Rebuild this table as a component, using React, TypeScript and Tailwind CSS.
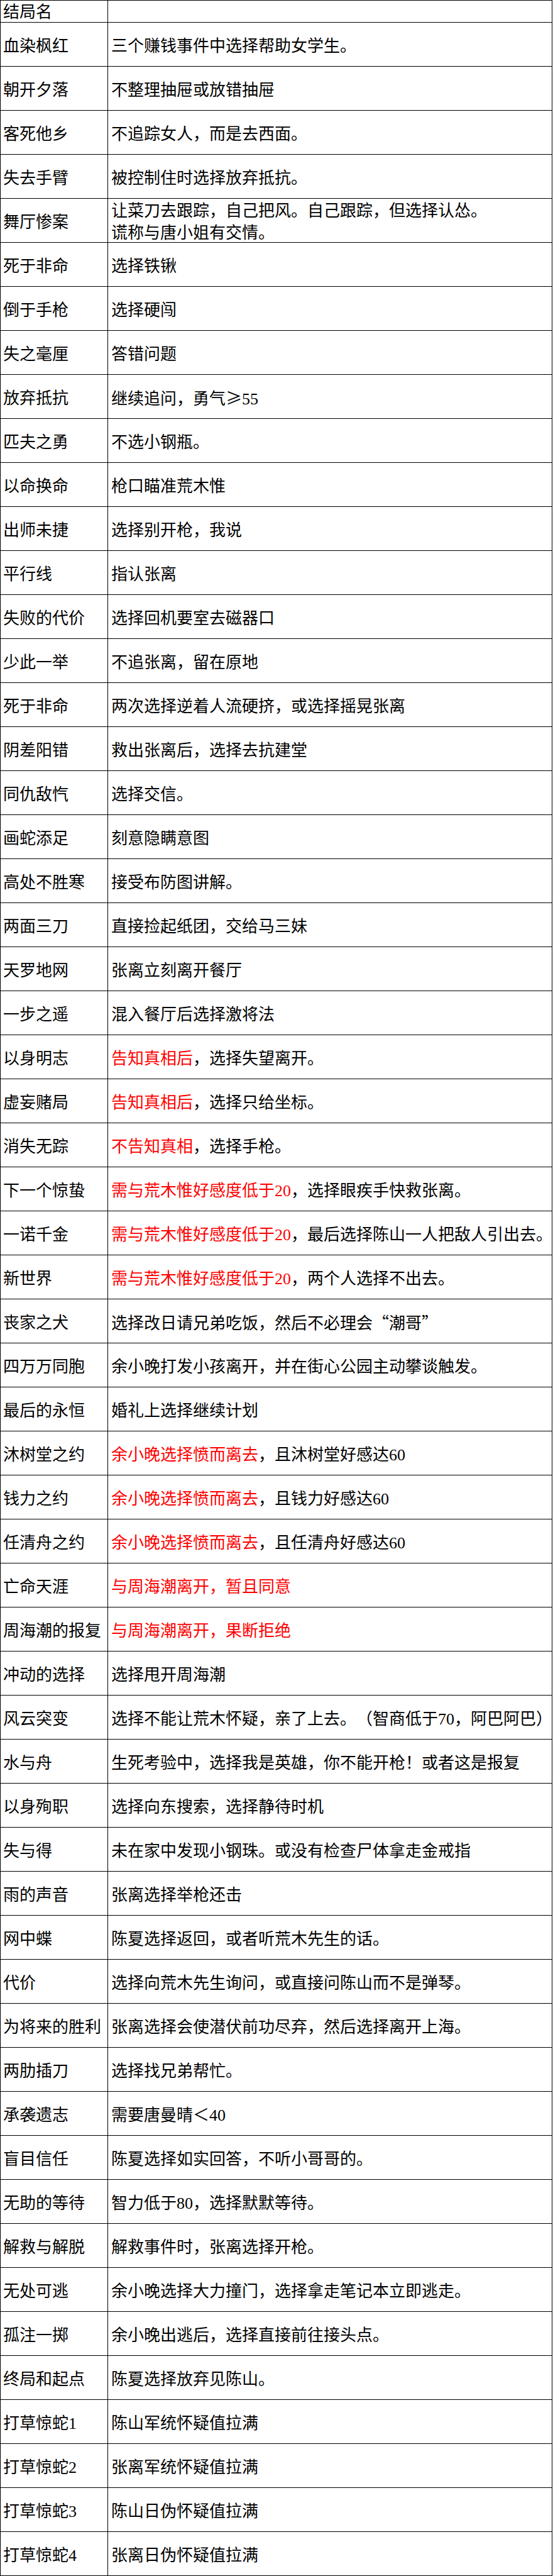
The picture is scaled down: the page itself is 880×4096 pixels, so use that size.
type Seg = string | { red: string } | { cjk: string };

type Row = { name: string; desc: Seg[][] };

const r = (t: string) => ({ red: t });
const c = (t: string) => ({ cjk: t });

const rows: Row[] = [
  { name: "血染枫红", desc: [["三个赚钱事件中选择帮助女学生。"]] },
  { name: "朝开夕落", desc: [["不整理抽屉或放错抽屉"]] },
  { name: "客死他乡", desc: [["不追踪女人，而是去西面。"]] },
  { name: "失去手臂", desc: [["被控制住时选择放弃抵抗。"]] },
  {
    name: "舞厅惨案",
    desc: [["让菜刀去跟踪，自己把风。自己跟踪，但选择认怂。"], ["谎称与唐小姐有交情。"]],
  },
  { name: "死于非命", desc: [["选择铁锹"]] },
  { name: "倒于手枪", desc: [["选择硬闯"]] },
  { name: "失之毫厘", desc: [["答错问题"]] },
  { name: "放弃抵抗", desc: [["继续追问，勇气", c("≥"), "55"]] },
  { name: "匹夫之勇", desc: [["不选小钢瓶。"]] },
  { name: "以命换命", desc: [["枪口瞄准荒木惟"]] },
  { name: "出师未捷", desc: [["选择别开枪，我说"]] },
  { name: "平行线", desc: [["指认张离"]] },
  { name: "失败的代价", desc: [["选择回机要室去磁器口"]] },
  { name: "少此一举", desc: [["不追张离，留在原地"]] },
  { name: "死于非命", desc: [["两次选择逆着人流硬挤，或选择摇晃张离"]] },
  { name: "阴差阳错", desc: [["救出张离后，选择去抗建堂"]] },
  { name: "同仇敌忾", desc: [["选择交信。"]] },
  { name: "画蛇添足", desc: [["刻意隐瞒意图"]] },
  { name: "高处不胜寒", desc: [["接受布防图讲解。"]] },
  { name: "两面三刀", desc: [["直接捡起纸团，交给马三妹"]] },
  { name: "天罗地网", desc: [["张离立刻离开餐厅"]] },
  { name: "一步之遥", desc: [["混入餐厅后选择激将法"]] },
  { name: "以身明志", desc: [[r("告知真相后"), "，选择失望离开。"]] },
  { name: "虚妄赌局", desc: [[r("告知真相后"), "，选择只给坐标。"]] },
  { name: "消失无踪", desc: [[r("不告知真相"), "，选择手枪。"]] },
  { name: "下一个惊蛰", desc: [[r("需与荒木惟好感度低于20"), "，选择眼疾手快救张离。"]] },
  { name: "一诺千金", desc: [[r("需与荒木惟好感度低于20"), "，最后选择陈山一人把敌人引出去。"]] },
  { name: "新世界", desc: [[r("需与荒木惟好感度低于20"), "，两个人选择不出去。"]] },
  { name: "丧家之犬", desc: [["选择改日请兄弟吃饭，然后不必理会", c("“"), "潮哥", c("”")]] },
  { name: "四万万同胞", desc: [["余小晚打发小孩离开，并在街心公园主动攀谈触发。"]] },
  { name: "最后的永恒", desc: [["婚礼上选择继续计划"]] },
  { name: "沐树堂之约", desc: [[r("余小晚选择愤而离去"), "，且沐树堂好感达60"]] },
  { name: "钱力之约", desc: [[r("余小晚选择愤而离去"), "，且钱力好感达60"]] },
  { name: "任清舟之约", desc: [[r("余小晚选择愤而离去"), "，且任清舟好感达60"]] },
  { name: "亡命天涯", desc: [[r("与周海潮离开，暂且同意")]] },
  { name: "周海潮的报复", desc: [[r("与周海潮离开，果断拒绝")]] },
  { name: "冲动的选择", desc: [["选择甩开周海潮"]] },
  { name: "风云突变", desc: [["选择不能让荒木怀疑，亲了上去。（智商低于70，阿巴阿巴）"]] },
  { name: "水与舟", desc: [["生死考验中，选择我是英雄，你不能开枪！或者这是报复"]] },
  { name: "以身殉职", desc: [["选择向东搜索，选择静待时机"]] },
  { name: "失与得", desc: [["未在家中发现小钢珠。或没有检查尸体拿走金戒指"]] },
  { name: "雨的声音", desc: [["张离选择举枪还击"]] },
  { name: "网中蝶", desc: [["陈夏选择返回，或者听荒木先生的话。"]] },
  { name: "代价", desc: [["选择向荒木先生询问，或直接问陈山而不是弹琴。"]] },
  { name: "为将来的胜利", desc: [["张离选择会使潜伏前功尽弃，然后选择离开上海。"]] },
  { name: "两肋插刀", desc: [["选择找兄弟帮忙。"]] },
  { name: "承袭遗志", desc: [["需要唐曼晴＜40"]] },
  { name: "盲目信任", desc: [["陈夏选择如实回答，不听小哥哥的。"]] },
  { name: "无助的等待", desc: [["智力低于80，选择默默等待。"]] },
  { name: "解救与解脱", desc: [["解救事件时，张离选择开枪。"]] },
  { name: "无处可逃", desc: [["余小晚选择大力撞门，选择拿走笔记本立即逃走。"]] },
  { name: "孤注一掷", desc: [["余小晚出逃后，选择直接前往接头点。"]] },
  { name: "终局和起点", desc: [["陈夏选择放弃见陈山。"]] },
  { name: "打草惊蛇1", desc: [["陈山军统怀疑值拉满"]] },
  { name: "打草惊蛇2", desc: [["张离军统怀疑值拉满"]] },
  { name: "打草惊蛇3", desc: [["陈山日伪怀疑值拉满"]] },
  { name: "打草惊蛇4", desc: [["张离日伪怀疑值拉满"]] },
];

function Line({ segs }: { segs: Seg[] }) {
  return (
    <div className="whitespace-nowrap">
      {segs.map((s, i) => {
        if (typeof s === "string") return <span key={i}>{s}</span>;
        if ("red" in s)
          return (
            <span key={i} className="text-[#ff0000]">
              {s.red}
            </span>
          );
        return (
          <span key={i} className="font-['Noto_Sans_CJK_SC',sans-serif]">
            {s.cjk}
          </span>
        );
      })}
    </div>
  );
}

export default function App() {
  return (
    <div className="bg-white w-[880px] font-['Liberation_Serif','Noto_Sans_CJK_SC',serif] text-[26px] leading-[35px] text-black [text-spacing-trim:space-all]">
      <div className="w-[879px] border-t border-l border-r border-black">
        {/* header */}
        <div className="flex h-[35px] border-b border-black">
          <div className="w-[171px] shrink-0 border-r border-black pl-[4px] flex items-center pt-[3px]">
            结局名
          </div>
          <div className="flex-1" />
        </div>

        {rows.map((row, i) => (
          <div key={i} className="flex h-[70px] border-b border-black">
            <div className="w-[171px] shrink-0 border-r border-black pl-[4px] flex items-center pt-[5px] whitespace-nowrap">
              {row.name}
            </div>
            <div className="flex-1 pl-[5px] flex flex-col justify-center pt-[5px]">
              {row.desc.map((segs, j) => (
                <Line key={j} segs={segs} />
              ))}
            </div>
          </div>
        ))}
      </div>
    </div>
  );
}
